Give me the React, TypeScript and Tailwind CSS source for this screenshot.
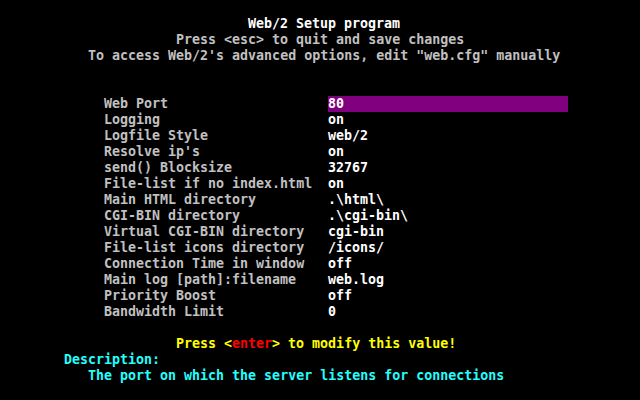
const items: [string, string][] = [
  ["Web Port", "80"],
  ["Logging", "on"],
  ["Logfile Style", "web/2"],
  ["Resolve ip's", "on"],
  ["send() Blocksize", "32767"],
  ["File-list if no index.html", "on"],
  ["Main HTML directory", ".\\html\\"],
  ["CGI-BIN directory", ".\\cgi-bin\\"],
  ["Virtual CGI-BIN directory", "cgi-bin"],
  ["File-list icons directory", "/icons/"],
  ["Connection Time in window", "off"],
  ["Main log [path]:filename", "web.log"],
  ["Priority Boost", "off"],
  ["Bandwidth Limit", "0"],
];

export default function App() {
  return (
    <div
      className="w-[640px] h-[400px] bg-black overflow-hidden flex flex-col text-[13.3px] leading-[16px] font-bold whitespace-pre"
      style={{ fontFamily: '"DejaVu Sans Mono", "Liberation Mono", monospace' }}
    >
      <div className="h-4" />
      <div className="h-4 pl-[248px] text-white">Web/2 Setup program</div>
      <div className="h-4 pl-[176px] text-[#c0c0c0]">Press &lt;esc&gt; to quit and save changes</div>
      <div className="h-4 pl-[88px] text-[#c0c0c0]">
        To access Web/2's advanced options, edit "web.cfg" manually
      </div>
      <div className="h-8" />
      <div className="flex flex-col pl-[104px]">
        {items.map(([label, value], i) => (
          <div key={label} className="flex h-4">
            <div className="w-[224px] text-[#c0c0c0]">{label}</div>
            <div className={`w-[240px] text-white ${i === 0 ? "bg-[#800080]" : ""}`}>{value}</div>
          </div>
        ))}
      </div>
      <div className="h-4" />
      <div className="h-4 pl-[176px] text-[#ffff00]">
        Press &lt;<span className="text-[#ff0000]">enter</span>&gt; to modify this value!
      </div>
      <div className="h-4 pl-[64px] text-[#22ffff]">Description:</div>
      <div className="h-4 pl-[88px] text-[#22ffff]">The port on which the server listens for connections</div>
    </div>
  );
}
